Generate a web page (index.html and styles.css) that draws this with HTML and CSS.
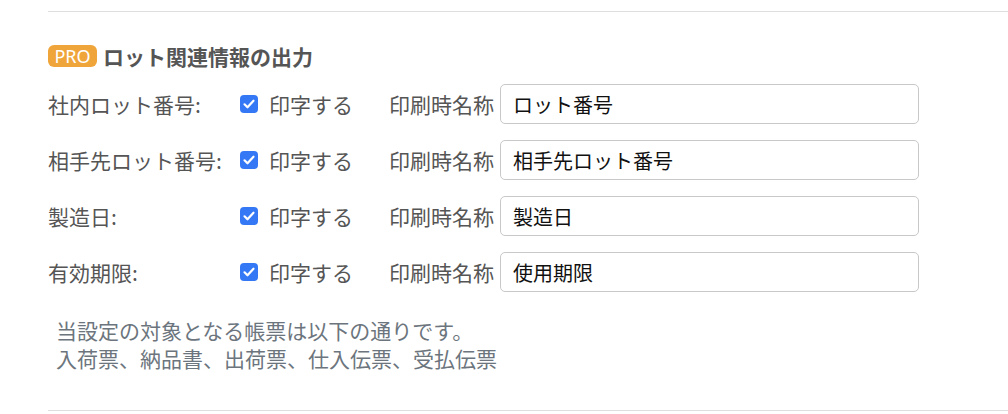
FILE: index.html
```html
<!DOCTYPE html>
<html lang="ja">
<head>
  <meta charset="UTF-8" />
  <meta name="viewport" content="width=device-width, initial-scale=1.0"/>
  <title>ロット関連情報の出力</title>
  <link rel="stylesheet" href="styles.css">
</head>
<body>

<div class="section">
  <div class="heading">
    <span class="badge">PRO</span>
    <span class="title">ロット関連情報の出力</span>
  </div>

  <div class="row">
    <span class="label">社内ロット番号:</span>
    <label class="check"><span class="box"><svg viewBox="0 0 18 18" width="18" height="18"><path d="M4.5 9.3l3 3 6-6.6" fill="none" stroke="#fff" stroke-width="2.2" stroke-linecap="round" stroke-linejoin="round"/></svg></span>印字する</label>
    <span class="print-name">印刷時名称</span>
    <input class="field" type="text" value="ロット番号">
  </div>

  <div class="row">
    <span class="label">相手先ロット番号:</span>
    <label class="check"><span class="box"><svg viewBox="0 0 18 18" width="18" height="18"><path d="M4.5 9.3l3 3 6-6.6" fill="none" stroke="#fff" stroke-width="2.2" stroke-linecap="round" stroke-linejoin="round"/></svg></span>印字する</label>
    <span class="print-name">印刷時名称</span>
    <input class="field" type="text" value="相手先ロット番号">
  </div>

  <div class="row">
    <span class="label">製造日:</span>
    <label class="check"><span class="box"><svg viewBox="0 0 18 18" width="18" height="18"><path d="M4.5 9.3l3 3 6-6.6" fill="none" stroke="#fff" stroke-width="2.2" stroke-linecap="round" stroke-linejoin="round"/></svg></span>印字する</label>
    <span class="print-name">印刷時名称</span>
    <input class="field" type="text" value="製造日">
  </div>

  <div class="row">
    <span class="label">有効期限:</span>
    <label class="check"><span class="box"><svg viewBox="0 0 18 18" width="18" height="18"><path d="M4.5 9.3l3 3 6-6.6" fill="none" stroke="#fff" stroke-width="2.2" stroke-linecap="round" stroke-linejoin="round"/></svg></span>印字する</label>
    <span class="print-name">印刷時名称</span>
    <input class="field" type="text" value="使用期限">
  </div>

  <p class="note">当設定の対象となる帳票は以下の通りです。<br>入荷票、納品書、出荷票、仕入伝票、受払伝票</p>
</div>

</body>
</html>
```

FILE: styles.css
```css
body {
  background-color: #fff;
  margin: 0;
  padding: 0;
  font-family: "Noto Sans CJK JP", "Noto Sans", sans-serif;
  color: #555;
}

.section {
  margin: 11px 0 0 48px;
  border-top: 1px solid #dedede;
  border-bottom: 1px solid #dedede;
  padding-top: 32px;
  height: 400px;
  box-sizing: border-box;
}

.heading {
  display: flex;
  align-items: center;
  height: 24px;
  margin-bottom: 16px;
}

.badge {
  display: inline-block;
  width: 49px;
  height: 22px;
  line-height: 22px;
  background: #f0a53b;
  color: #fff;
  border-radius: 6px;
  font-family: "Noto Sans", sans-serif;
  font-size: 18px;
  text-align: center;
  margin-right: 6px;
}

.title {
  font-size: 21px;
  font-weight: bold;
  line-height: 24px;
  color: #555;
}

.row {
  display: flex;
  align-items: center;
  height: 40px;
  margin-bottom: 16px;
  font-size: 21px;
}

.label {
  width: 192px;
}

.check {
  display: flex;
  align-items: center;
  width: 149px;
}

.box {
  display: inline-block;
  width: 18px;
  height: 18px;
  background: #3478f6;
  border-radius: 4px;
  margin-right: 11px;
}

.box svg {
  display: block;
}

.print-name {
  margin-right: 6px;
}

.field {
  width: 419px;
  height: 40px;
  box-sizing: border-box;
  border: 1px solid #c8c8c8;
  border-radius: 5px;
  padding: 0 12px;
  font-family: "Noto Sans CJK JP", "Noto Sans", sans-serif;
  font-size: 20px;
  color: #111;
  outline: none;
}

.note {
  margin: 24px 0 0 8px;
  font-size: 21px;
  line-height: 28px;
  color: #6c757d;
}
```
